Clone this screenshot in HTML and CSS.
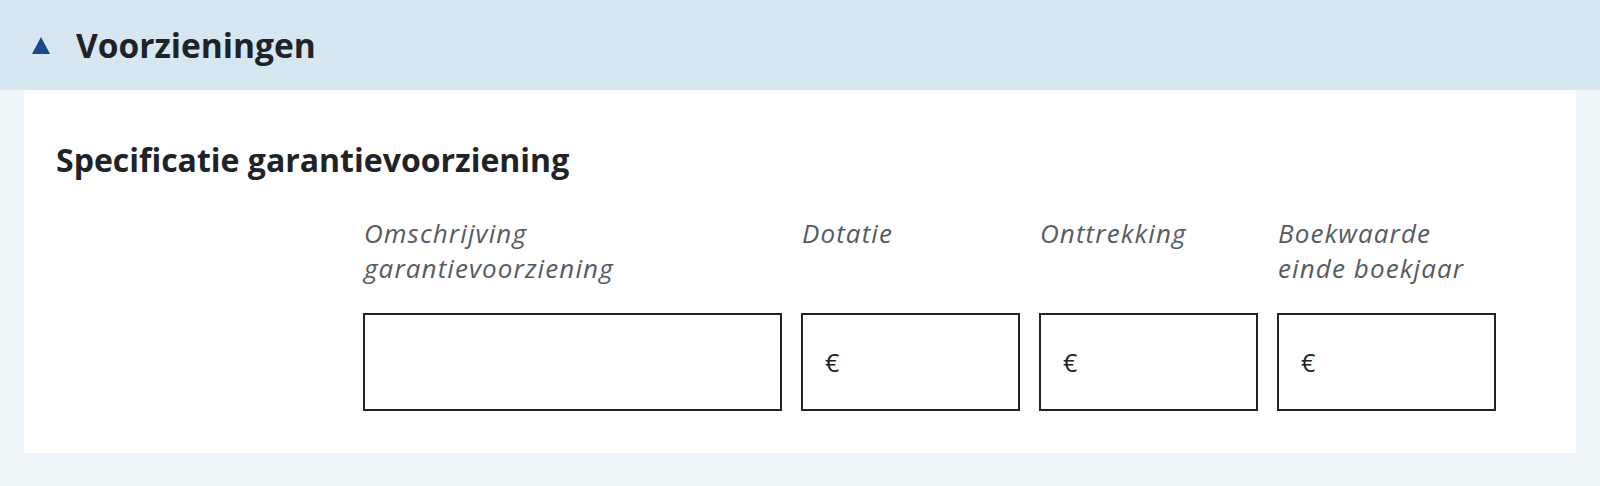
FILE: index.html
```html
<!DOCTYPE html>
<html lang="nl">
<head>
    <meta charset="UTF-8">
    <link rel="stylesheet" href="styles.css">
</head>
<body>
    <section class="accordion">
        <!-- Kop van de sectie -->
        <div class="accordion-header">
            <svg class="toggle-icon" width="18" height="17" viewBox="0 0 18 17" aria-hidden="true">
                <polygon points="9,0 18,17 0,17" fill="#174a86"/>
            </svg>
            <h2>Voorzieningen</h2>
        </div>

        <!-- Inhoud -->
        <div class="accordion-body">
            <h3>Specificatie garantievoorziening</h3>

            <div class="field-grid">
                <div class="row-label"></div>
                <label class="field-label" for="omschrijving">Omschrijving<br>garantievoorziening</label>
                <label class="field-label" for="dotatie">Dotatie</label>
                <label class="field-label" for="onttrekking">Onttrekking</label>
                <label class="field-label" for="boekwaarde">Boekwaarde<br>einde boekjaar</label>

                <div class="row-label"></div>
                <div class="input-box">
                    <input type="text" id="omschrijving">
                </div>
                <div class="input-box">
                    <span class="prefix">€</span>
                    <input type="text" id="dotatie">
                </div>
                <div class="input-box">
                    <span class="prefix">€</span>
                    <input type="text" id="onttrekking">
                </div>
                <div class="input-box">
                    <span class="prefix">€</span>
                    <input type="text" id="boekwaarde">
                </div>
            </div>
        </div>
    </section>
</body>
</html>
```

FILE: styles.css
```css
/* Basis */
body {
    margin: 0;
    background-color: #eef6fa;
    font-family: "Open Sans", Lato, sans-serif;
    font-variant-ligatures: none;
    color: #1f2327;
}

/* Sectie kop */
.accordion-header {
    display: flex;
    align-items: center;
    gap: 26px;
    height: 90px;
    padding-left: 32px;
    background-color: #d6e7f2;
}

.toggle-icon {
    display: block;
    flex-shrink: 0;
}

.accordion-header h2 {
    margin: 0;
    font-size: 33.5px;
    font-weight: 700;
    line-height: 44px;
    color: #1f2327;
}

/* Sectie inhoud */
.accordion-body {
    margin: 0 24px 33px 24px;
    padding: 32px 32px 42px 32px;
    background-color: #ffffff;
}

.accordion-body h3 {
    margin: 17px 0 36px 0;
    font-size: 32px;
    font-weight: 700;
    line-height: 41px;
    color: #1f2327;
}

/* Velden */
.field-grid {
    display: grid;
    grid-template-columns: 288px 419px 219px 219px 219px;
    column-gap: 19px;
    row-gap: 27px;
}

.field-label {
    font-size: 26px;
    font-style: italic;
    line-height: 35px;
    letter-spacing: 1.1px;
    color: #575b5f;
    padding-left: 1px;
}

.input-box {
    display: flex;
    align-items: center;
    height: 98px;
    box-sizing: border-box;
    border: 2px solid #232323;
    background: #ffffff;
}

.prefix {
    padding-left: 22px;
    font-size: 25px;
    color: #222222;
}

.input-box input {
    flex: 1;
    min-width: 0;
    height: 100%;
    border: none;
    outline: none;
    padding: 0 12px;
    font-family: inherit;
    font-size: 25px;
    background: transparent;
}
```
